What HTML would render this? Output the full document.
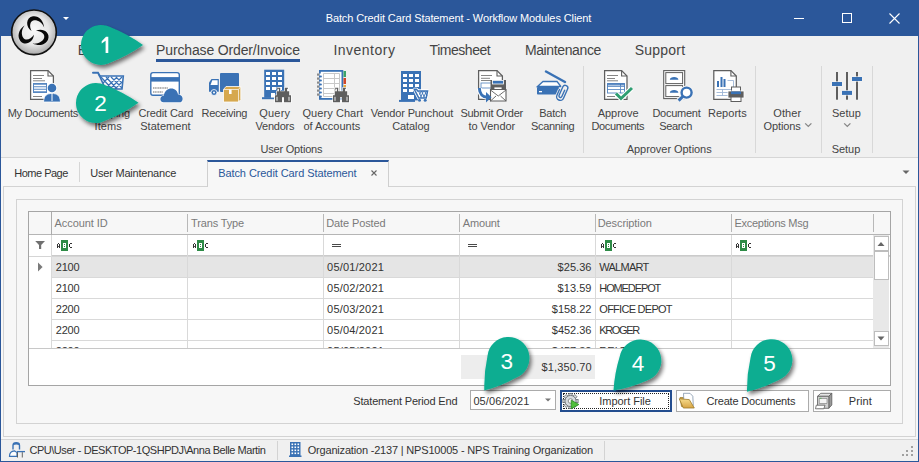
<!DOCTYPE html>
<html><head><meta charset="utf-8"><style>
html,body{margin:0;padding:0;width:919px;height:462px;overflow:hidden;background:#F7F7F7}
.b{position:absolute}
.t{position:absolute;white-space:nowrap;font-family:"Liberation Sans",sans-serif}
svg{position:absolute;left:0;top:0}
</style></head><body>
<div class="b" style="left:0px;top:0px;width:919px;height:36px;background:#2B579A"></div>
<div class="b" style="left:1px;top:36px;width:917px;height:121px;background:#F0F0F0"></div>
<div class="b" style="left:1px;top:157px;width:917px;height:1px;background:#D6D6D6"></div>
<div class="b" style="left:1px;top:158px;width:917px;height:281px;background:#F7F7F7"></div>
<div class="b" style="left:0px;top:36px;width:1px;height:426px;background:#2B579A"></div>
<div class="b" style="left:918px;top:36px;width:1px;height:426px;background:#2B579A"></div>
<div class="b" style="left:0px;top:461px;width:919px;height:1px;background:#2B579A"></div>
<div class="b" style="left:156px;top:59px;width:144px;height:3px;background:#2B579A"></div>
<div class="b" style="left:583px;top:66px;width:1px;height:87px;background:#D8D8D8"></div>
<div class="b" style="left:755px;top:66px;width:1px;height:87px;background:#D8D8D8"></div>
<div class="b" style="left:821px;top:66px;width:1px;height:87px;background:#D8D8D8"></div>
<div class="b" style="left:872px;top:66px;width:1px;height:87px;background:#D8D8D8"></div>
<div class="b" style="left:79px;top:162px;width:1px;height:20px;background:#D6D6D6"></div>
<div class="b" style="left:3px;top:186px;width:913px;height:251px;border:1px solid #D3D3D3;box-sizing:border-box;background:#F7F7F7"></div>
<div class="b" style="left:207px;top:160px;width:182px;height:27px;border:1px solid #CFCFCF;border-bottom:none;border-top:2px solid #2B579A;box-sizing:border-box;background:#F7F7F7"></div>
<div class="b" style="left:16px;top:199px;width:887px;height:225px;border:1px solid #D3D3D3;box-sizing:border-box;background:#F7F7F7"></div>
<div class="b" style="left:28px;top:211px;width:863px;height:175px;border:1px solid #A5A5A5;box-sizing:border-box;background:#fff"></div>
<div class="b" style="left:29px;top:212px;width:861px;height:22px;background:#F7F7F7"></div>
<div class="b" style="left:29px;top:234px;width:861px;height:1px;background:#B5B5B5"></div>
<div class="b" style="left:29px;top:256px;width:861px;height:1px;background:#D5D5D5"></div>
<div class="b" style="left:52px;top:255px;width:838px;height:1px;background:#CBCBCB"></div>
<div class="b" style="left:52px;top:257px;width:821px;height:20px;background:#E5E5E5"></div>
<div class="b" style="left:52px;top:277px;width:821px;height:1px;background:#D9D9D9"></div>
<div class="b" style="left:52px;top:298px;width:821px;height:1px;background:#D9D9D9"></div>
<div class="b" style="left:52px;top:319px;width:821px;height:1px;background:#D9D9D9"></div>
<div class="b" style="left:52px;top:340px;width:821px;height:1px;background:#D9D9D9"></div>
<div class="b" style="left:187px;top:214px;width:1px;height:18px;background:#B8B8B8"></div>
<div class="b" style="left:187px;top:235px;width:1px;height:113px;background:#D9D9D9"></div>
<div class="b" style="left:323px;top:214px;width:1px;height:18px;background:#B8B8B8"></div>
<div class="b" style="left:323px;top:235px;width:1px;height:113px;background:#D9D9D9"></div>
<div class="b" style="left:459px;top:214px;width:1px;height:18px;background:#B8B8B8"></div>
<div class="b" style="left:459px;top:235px;width:1px;height:113px;background:#D9D9D9"></div>
<div class="b" style="left:595px;top:214px;width:1px;height:18px;background:#B8B8B8"></div>
<div class="b" style="left:595px;top:235px;width:1px;height:113px;background:#D9D9D9"></div>
<div class="b" style="left:731px;top:214px;width:1px;height:18px;background:#B8B8B8"></div>
<div class="b" style="left:731px;top:235px;width:1px;height:113px;background:#D9D9D9"></div>
<div class="b" style="left:873px;top:214px;width:1px;height:18px;background:#B8B8B8"></div>
<div class="b" style="left:51px;top:212px;width:1px;height:23px;background:#ABABAB"></div>
<div class="b" style="left:51px;top:235px;width:1px;height:113px;background:#D9D9D9"></div>
<div class="b" style="left:29px;top:348px;width:861px;height:1px;background:#C8C8C8"></div>
<div class="b" style="left:873px;top:235px;width:16px;height:113px;background:#E8E8E8"></div>
<div class="b" style="left:874px;top:236px;width:15px;height:15px;border:1px solid #BDBDBD;box-sizing:border-box;background:#fff"></div>
<div class="b" style="left:874px;top:251px;width:15px;height:29px;border:1px solid #BDBDBD;box-sizing:border-box;background:#fff"></div>
<div class="b" style="left:874px;top:331px;width:15px;height:15px;border:1px solid #BDBDBD;box-sizing:border-box;background:#fff"></div>
<div class="b" style="left:461px;top:355px;width:134px;height:24px;background:#EDEDED"></div>
<div class="b" style="left:470px;top:390px;width:86px;height:20px;border:1px solid #ABABAB;box-sizing:border-box;background:#fff"></div>
<div class="b" style="left:560px;top:390px;width:112px;height:22px;border:2px solid #234D8F;box-sizing:border-box;background:#fff"></div>
<div class="b" style="left:563px;top:393px;width:106px;height:16px;border:1px dotted #222;box-sizing:border-box"></div>
<div class="b" style="left:676px;top:390px;width:133px;height:22px;border:1px solid #ABABAB;box-sizing:border-box;background:#fff"></div>
<div class="b" style="left:813px;top:390px;width:78px;height:22px;border:1px solid #ABABAB;box-sizing:border-box;background:#fff"></div>
<div class="b" style="left:1px;top:439px;width:917px;height:1px;background:#D6D6D6"></div>
<div class="b" style="left:1px;top:440px;width:917px;height:21px;background:#F0F0F0"></div>
<div class="b" style="left:277px;top:441px;width:1px;height:19px;background:#D3D3D3"></div>
<div class="b" style="left:604px;top:441px;width:1px;height:19px;background:#D3D3D3"></div>
<svg width="919" height="462" viewBox="0 0 919 462">
<path d="M794 18.5h10" stroke="#fff" stroke-width="1"/>
<rect x="842.5" y="13.5" width="9" height="9" fill="none" stroke="#fff" stroke-width="1"/>
<path d="M889.5 13.5l10 10M899.5 13.5l-10 10" stroke="#fff" stroke-width="1.1"/>
<path d="M63 17h6l-3 3z" fill="#fff"/>
<defs><radialGradient id="lg" cx="0.5" cy="0.45" r="0.55"><stop offset="0" stop-color="#fafafa"/><stop offset="0.6" stop-color="#e6e6e6"/><stop offset="1" stop-color="#a8a8a8"/></radialGradient><filter id="sh" x="-30%" y="-30%" width="160%" height="160%"><feGaussianBlur in="SourceAlpha" stdDeviation="2.2"/><feOffset dx="2" dy="3" result="o"/><feComponentTransfer><feFuncA type="linear" slope="0.55"/></feComponentTransfer><feMerge><feMergeNode/><feMergeNode in="SourceGraphic"/></feMerge></filter></defs>
<circle cx="34" cy="32.3" r="22.3" fill="url(#lg)" stroke="#111" stroke-width="1.6"/>
<path transform="rotate(0 33.8 32.2)" d="M31.5 31 C 25.5 27, 25.5 17.5, 33 16.2 C 38.5 15.5, 43.5 20, 44.2 27.5 C 42 22.5, 38 20, 34 20.3 C 30 20.8, 29 26, 31.5 31 Z" fill="#080808"/>
<path transform="rotate(120 33.8 32.2)" d="M31.5 31 C 25.5 27, 25.5 17.5, 33 16.2 C 38.5 15.5, 43.5 20, 44.2 27.5 C 42 22.5, 38 20, 34 20.3 C 30 20.8, 29 26, 31.5 31 Z" fill="#080808"/>
<path transform="rotate(240 33.8 32.2)" d="M31.5 31 C 25.5 27, 25.5 17.5, 33 16.2 C 38.5 15.5, 43.5 20, 44.2 27.5 C 42 22.5, 38 20, 34 20.3 C 30 20.8, 29 26, 31.5 31 Z" fill="#080808"/>
<path d="M30.6 70.6H48L53.4 76V99.4H30.6Z" fill="#fff" stroke="#5E5E5E" stroke-width="1.25"/><path d="M48 70.6V76H53.4" fill="none" stroke="#5E5E5E" stroke-width="1.1"/>
<path d="M33 75.5h11M33 78.5h9M33 80.8h12M33 96.5h9" stroke="#777" stroke-width="0.9"/>
<rect x="33" y="83" width="14" height="10" fill="#3A72B5" opacity="0.85"/><path d="M34 85.5h12M34 88h12M34 90.5h12" stroke="#fff" stroke-width="1.3"/>
<circle cx="52" cy="88" r="5.2" fill="#fff"/><circle cx="52" cy="88" r="4.3" fill="#3A72B5"/>
<path d="M43.5 102 C44 95,47 93.5,52 93.5 C57 93.5,60 95,60.5 102Z" fill="#3A72B5" stroke="#fff" stroke-width="0.8"/><path d="M52 94v7" stroke="#fff" stroke-width="1"/>
<path d="M93 72.8h5l1.8 3.2" fill="none" stroke="#3A72B5" stroke-width="2" stroke-linecap="round"/>
<path d="M99.6 76H123.3L122 89H105.5Z" fill="#fff" stroke="#3A72B5" stroke-width="1.6"/>
<path d="M101 77L112 89M106 77L117 89M111 77L122 88M116 77L122 83M103 83L109 77M105 89L117 77M110 89L122 77M115 89L122 82" stroke="#3A72B5" stroke-width="1.3"/>
<rect x="150.8" y="72.6" width="28.5" height="22.6" rx="2.2" fill="#fff" stroke="#3A72B5" stroke-width="1.4"/>
<rect x="151" y="77.1" width="28.5" height="4.5" fill="#3A72B5"/>
<path d="M153 88h15M153 92h10" stroke="#666" stroke-width="1.2" stroke-dasharray="1.2 0.5"/>
<path d="M163.5 102.3 C159.3 102.3,159.3 95.8,163.8 95.8 C164.5 91,168 88.6,171.2 88.6 C175 88.6,177.6 91.2,178 94.6 C181.2 94.6,182.8 97,182.6 99.2 C182.5 101.2,181.2 102.3,179.5 102.3 Z" fill="#3A72B5" stroke="#fff" stroke-width="1.1" paint-order="stroke"/>
<rect x="220" y="73" width="19" height="19" rx="1" fill="#3A72B5"/>
<path d="M209 91.8V82.5L211.5 78.9H218.8V91.8Z" fill="#3A72B5"/><path d="M210.5 85L212.3 80.3H217.6V85Z" fill="#fff"/>
<circle cx="214" cy="92.5" r="3" fill="#3A72B5" stroke="#fff" stroke-width="0.8"/><circle cx="214" cy="92.5" r="1" fill="#fff"/>
<path d="M223.5 89.5L226 86.5H240.8V99.5L238.5 102H223.5Z" fill="#D6A84E" stroke="#fff" stroke-width="0.8"/>
<path d="M223.5 89.5H238.5L240.8 86.5M238.5 89.5V102" fill="none" stroke="#fff" stroke-width="0.7"/><rect x="229" y="89.5" width="2.6" height="4.5" fill="#fff"/>
<rect x="264.2" y="69.7" width="20.0" height="28.0" fill="#3A72B5"/><rect x="262" y="97.2" width="12" height="2" fill="#3A72B5"/><rect x="266" y="72" width="4" height="3" fill="#fff"/><rect x="266" y="77" width="4" height="3" fill="#fff"/><rect x="266" y="82" width="4" height="3" fill="#fff"/><rect x="266" y="87" width="4" height="3" fill="#fff"/><rect x="272" y="72" width="4" height="3" fill="#fff"/><rect x="272" y="77" width="4" height="3" fill="#fff"/><rect x="272" y="82" width="4" height="3" fill="#fff"/><rect x="272" y="87" width="4" height="3" fill="#fff"/><rect x="278" y="72" width="4" height="3" fill="#fff"/><rect x="278" y="77" width="4" height="3" fill="#fff"/><rect x="278" y="82" width="4" height="3" fill="#fff"/><rect x="278" y="87" width="4" height="3" fill="#fff"/><rect x="271" y="93" width="4" height="4.5" fill="#fff"/>
<path d="M277 87.8h3.2v3.5h4.6v-3.5h3.2v3.5h1.2v4h1.8v7h-7v-5h-2v5h-7v-7h1.8v-4h1.2z" fill="#5E5E5E" stroke="#fff" stroke-width="1.2" paint-order="stroke"/><path d="M277 96.8v4M289 96.8v4M278.5 88.8v2.5M287.5 88.8v2.5" stroke="#fff" stroke-width="0.9"/>
<rect x="319.9" y="70.9" width="22.5" height="28" fill="#fff" stroke="#3A72B5" stroke-width="1.8"/>
<path d="M323.5 73.5h16v23h-16zM323.5 78.5h16M323.5 83.5h16M323.5 88.5h16M323.5 93.5h16M334.5 73.5v23" fill="none" stroke="#C8C8C8" stroke-width="1"/>
<rect x="317" y="73.5" width="2.6" height="2.2" fill="#8A8A8A"/><rect x="319.6" y="73.5" width="2.2" height="2.2" fill="#fff"/><rect x="319.6" y="75.7" width="2.2" height="1.8" fill="#3A72B5"/>
<rect x="317" y="77.5" width="2.6" height="2.2" fill="#8A8A8A"/><rect x="319.6" y="77.5" width="2.2" height="2.2" fill="#fff"/><rect x="319.6" y="79.7" width="2.2" height="1.8" fill="#3A72B5"/>
<rect x="317" y="81.5" width="2.6" height="2.2" fill="#8A8A8A"/><rect x="319.6" y="81.5" width="2.2" height="2.2" fill="#fff"/><rect x="319.6" y="83.7" width="2.2" height="1.8" fill="#3A72B5"/>
<rect x="317" y="85.5" width="2.6" height="2.2" fill="#8A8A8A"/><rect x="319.6" y="85.5" width="2.2" height="2.2" fill="#fff"/><rect x="319.6" y="87.7" width="2.2" height="1.8" fill="#3A72B5"/>
<rect x="317" y="89.5" width="2.6" height="2.2" fill="#8A8A8A"/><rect x="319.6" y="89.5" width="2.2" height="2.2" fill="#fff"/><rect x="319.6" y="91.7" width="2.2" height="1.8" fill="#3A72B5"/>
<rect x="317" y="93.5" width="2.6" height="2.2" fill="#8A8A8A"/><rect x="319.6" y="93.5" width="2.2" height="2.2" fill="#fff"/><rect x="319.6" y="95.7" width="2.2" height="1.8" fill="#3A72B5"/>
<rect x="343.5" y="71" width="2.5" height="6" fill="#3DA36A"/><rect x="343.5" y="78" width="2.5" height="6" fill="#D0472A"/><rect x="343.5" y="85" width="2.5" height="2.5" fill="#EBA93A"/>
<path d="M335 87.8h3.2v3.5h4.6v-3.5h3.2v3.5h1.2v4h1.8v7h-7v-5h-2v5h-7v-7h1.8v-4h1.2z" fill="#5E5E5E" stroke="#fff" stroke-width="1.2" paint-order="stroke"/><path d="M335 96.8v4M347 96.8v4M336.5 88.8v2.5M345.5 88.8v2.5" stroke="#fff" stroke-width="0.9"/>
<rect x="401" y="71" width="20" height="29.400000000000006" fill="#3A72B5"/><rect x="399" y="99.9" width="16" height="2" fill="#3A72B5"/><rect x="403" y="74" width="4" height="3" fill="#fff"/><rect x="403" y="79" width="4" height="3" fill="#fff"/><rect x="403" y="84" width="4" height="3" fill="#fff"/><rect x="403" y="89" width="4" height="3" fill="#fff"/><rect x="409" y="74" width="4" height="3" fill="#fff"/><rect x="409" y="79" width="4" height="3" fill="#fff"/><rect x="409" y="84" width="4" height="3" fill="#fff"/><rect x="409" y="89" width="4" height="3" fill="#fff"/><rect x="415" y="74" width="4" height="3" fill="#fff"/><rect x="415" y="79" width="4" height="3" fill="#fff"/><rect x="415" y="84" width="4" height="3" fill="#fff"/><rect x="415" y="89" width="4" height="3" fill="#fff"/><rect x="408" y="95" width="6" height="4" fill="#fff"/>
<path d="M414.3 89.3h2.2l1.2 1.6H427.6L426.2 98H418.8ZM419.5 100.3h.1M425.2 100.3h.1" fill="#fff" stroke="#fff" stroke-width="3.2" stroke-linejoin="round" stroke-linecap="round"/>
<path d="M414.3 89.3h2.2l1.2 1.6H427.6L426.2 98H418.8Z" fill="#fff" stroke="#3A72B5" stroke-width="1.5"/>
<path d="M418.5 91L421.5 97.5M421.5 91L424.5 97.5M424.5 91L427 96M419.5 94.5L421.5 91M420.5 97.5L423.5 91M423.5 97.5L426.5 91" stroke="#3A72B5" stroke-width="0.9"/>
<circle cx="419.5" cy="100.3" r="1.5" fill="#3A72B5"/><circle cx="425.2" cy="100.3" r="1.5" fill="#3A72B5"/>
<path d="M478.6 70.6H497L502.4 76V99.4H478.6Z" fill="#fff" stroke="#5E5E5E" stroke-width="1.25"/><path d="M497 70.6V76H502.4" fill="none" stroke="#5E5E5E" stroke-width="1.1"/>
<path d="M481 75.5h11M481 78.3h9M481 80.5h11" stroke="#777" stroke-width="0.9"/>
<rect x="481" y="83" width="11" height="5" fill="#fff" stroke="#3A72B5" stroke-width="0.9" opacity="0.8"/>
<rect x="490.5" y="80" width="15.5" height="9" fill="#5E5E5E"/><rect x="492.5" y="80.5" width="11" height="3.5" fill="#3A72B5" stroke="#fff" stroke-width="0.8"/><rect x="494" y="87" width="8" height="3" fill="#fff" stroke="#5E5E5E" stroke-width="0.8"/>
<path d="M490.5 89.5h15.5v11.5h-15.5z" fill="#fff" stroke="#5E5E5E" stroke-width="1.1"/><path d="M490.5 90l7.75 6 7.75-6M490.5 101l5.5-5M506 101l-5.5-5" fill="none" stroke="#5E5E5E" stroke-width="0.9"/>
<path d="M479.3 88 C479.5 94,483 97.2,487.5 97.2" fill="none" stroke="#fff" stroke-width="5"/><path d="M479.3 88 C479.5 94,483 97.2,487.5 97.2" fill="none" stroke="#3A72B5" stroke-width="3"/><path d="M486 92l5.5 5.2-5.5 5.2z" fill="#3A72B5"/>
<path d="M546 71.5L565 82" stroke="#3A72B5" stroke-width="2.5" stroke-linecap="round"/>
<path d="M537.5 86.5L543 81.5H557L561 86.5Z" fill="#fff" stroke="#3A72B5" stroke-width="1.3"/>
<rect x="537" y="87" width="22" height="7.5" rx="0.8" fill="#3A72B5"/><rect x="539" y="91" width="3" height="1.3" fill="#fff"/>
<path transform="translate(562.8 83.3) rotate(24)" d="M4.5 5V12.5A1.5 1.5 0 0 1 1.5 12.5V3.2A2.6 2.6 0 0 1 6.7 3.2V13.3A3.6 3.6 0 0 1 -0.5 13.3V6.5" fill="none" stroke="#F0F0F0" stroke-width="3"/>
<path transform="translate(562.8 83.3) rotate(24)" d="M4.5 5V12.5A1.5 1.5 0 0 1 1.5 12.5V3.2A2.6 2.6 0 0 1 6.7 3.2V13.3A3.6 3.6 0 0 1 -0.5 13.3V6.5" fill="none" stroke="#3A72B5" stroke-width="1.4"/>
<path d="M604.6 70.6H621.6L627.0 76V99.4H604.6Z" fill="#fff" stroke="#5E5E5E" stroke-width="1.25"/><path d="M621.6 70.6V76H627.0" fill="none" stroke="#5E5E5E" stroke-width="1.1"/>
<path d="M607 75.5h11M607 78.5h8M607 80.8h11M607 96.5h8" stroke="#777" stroke-width="0.9"/>
<rect x="607.5" y="83.5" width="17" height="9.5" fill="#fff" stroke="#3A72B5" stroke-width="1" opacity="0.8"/><path d="M607.5 86.5h17M607.5 89.5h17M620.5 84v9" stroke="#3A72B5" stroke-width="0.9" opacity="0.8"/><rect x="607.5" y="83.5" width="17" height="2" fill="#3A72B5" opacity="0.8"/>
<path d="M616 93.5L621 98.5L632 88" fill="none" stroke="#fff" stroke-width="5"/><path d="M616 93.5L621 98.5L632 88" fill="none" stroke="#2F9E72" stroke-width="3"/>
<rect x="663.7" y="70.6" width="21" height="28" fill="#fff" stroke="#5E5E5E" stroke-width="1.1"/>
<rect x="665.8" y="72.6" width="16.8" height="11" fill="#fff" stroke="#5E5E5E" stroke-width="1"/><rect x="665.8" y="85.6" width="16.8" height="11" fill="#fff" stroke="#5E5E5E" stroke-width="1"/>
<path d="M669.8 79.8 C669.8 76.2,678.4 76.2,678.4 79.8Z" fill="#3A72B5"/><path d="M669.8 92.8 C669.8 89.2,678.4 89.2,678.4 92.8Z" fill="#3A72B5"/>
<circle cx="686.6" cy="92.6" r="5.2" fill="#fff" stroke="#F4F4F4" stroke-width="4"/><path d="M682.6 96.6L678.3 100.8" stroke="#F4F4F4" stroke-width="5"/><circle cx="686.6" cy="92.6" r="5" fill="#fff" stroke="#3A72B5" stroke-width="2.4"/><path d="M683 96.2L678.6 100.6" stroke="#3A72B5" stroke-width="3"/>
<path d="M713.8000000000001 70.6H730.9L736.3 76V99.4H713.8000000000001Z" fill="#fff" stroke="#5E5E5E" stroke-width="1.25"/><path d="M730.9 70.6V76H736.3" fill="none" stroke="#5E5E5E" stroke-width="1.1"/>
<rect x="717" y="81" width="2" height="6" fill="#3A72B5"/><rect x="720.5" y="77" width="2" height="10" fill="#3A72B5"/><rect x="723.5" y="79" width="2" height="8" fill="#3A72B5"/>
<path d="M716.5 89.5h17M716.5 92.5h17M716.5 95.5h14M727.5 80.5h6v15M722.5 89v7" fill="none" stroke="#9DB5D6" stroke-width="0.9"/>
<rect x="731.5" y="87" width="9" height="5" fill="#fff" stroke="#5E5E5E" stroke-width="1"/><rect x="728" y="91" width="16" height="7" fill="#5E5E5E" stroke="#fff" stroke-width="0.8"/><rect x="731" y="91.5" width="10" height="2.6" fill="#3A72B5"/><rect x="731" y="97" width="10" height="4.5" fill="#fff" stroke="#5E5E5E" stroke-width="1"/>
<rect x="836" y="72" width="2" height="27.7" fill="#5E5E5E"/>
<rect x="846" y="72" width="2" height="27.7" fill="#5E5E5E"/>
<rect x="856" y="72" width="2" height="27.7" fill="#5E5E5E"/>
<rect x="832" y="82" width="10" height="4" fill="#3A72B5" stroke="#F4F4F4" stroke-width="1.2" paint-order="stroke"/><rect x="842" y="90.9" width="10" height="4" fill="#3A72B5" stroke="#F4F4F4" stroke-width="1.2" paint-order="stroke"/><rect x="852" y="77" width="10" height="4" fill="#3A72B5" stroke="#F4F4F4" stroke-width="1.2" paint-order="stroke"/>
<path d="M805.2 123.4l3.1 3 3.1-3" fill="none" stroke="#858585" stroke-width="1.3"/>
<path d="M844.2 123.4l3.1 3 3.1-3" fill="none" stroke="#858585" stroke-width="1.3"/>
<path d="M371.5 170.5l5 5M376.5 170.5l-5 5" stroke="#666" stroke-width="1.1"/>
<path d="M902.5 170.5h7l-3.5 3.5z" fill="#666"/>
<path d="M35.2 241H45L41.2 245V249H39V245Z" fill="#707070"/>
<g shape-rendering="crispEdges"><rect x="57" y="244" width="1" height="4" fill="#333"/><rect x="59" y="244" width="1" height="4" fill="#333"/><rect x="58" y="243" width="1" height="1" fill="#333"/><rect x="58" y="246" width="1" height="1" fill="#555"/><rect x="61" y="240" width="7" height="11" fill="#2E8B47"/><rect x="63" y="243" width="3" height="5" fill="#fff"/><rect x="64" y="244" width="1" height="1" fill="#2E8B47"/><rect x="64" y="246" width="1" height="1" fill="#2E8B47"/><rect x="69" y="244" width="1" height="3" fill="#333"/><rect x="70" y="243" width="2" height="1" fill="#333"/><rect x="70" y="247" width="2" height="1" fill="#333"/></g>
<g shape-rendering="crispEdges"><rect x="193" y="244" width="1" height="4" fill="#333"/><rect x="195" y="244" width="1" height="4" fill="#333"/><rect x="194" y="243" width="1" height="1" fill="#333"/><rect x="194" y="246" width="1" height="1" fill="#555"/><rect x="197" y="240" width="7" height="11" fill="#2E8B47"/><rect x="199" y="243" width="3" height="5" fill="#fff"/><rect x="200" y="244" width="1" height="1" fill="#2E8B47"/><rect x="200" y="246" width="1" height="1" fill="#2E8B47"/><rect x="205" y="244" width="1" height="3" fill="#333"/><rect x="206" y="243" width="2" height="1" fill="#333"/><rect x="206" y="247" width="2" height="1" fill="#333"/></g>
<g shape-rendering="crispEdges"><rect x="601" y="244" width="1" height="4" fill="#333"/><rect x="603" y="244" width="1" height="4" fill="#333"/><rect x="602" y="243" width="1" height="1" fill="#333"/><rect x="602" y="246" width="1" height="1" fill="#555"/><rect x="605" y="240" width="7" height="11" fill="#2E8B47"/><rect x="607" y="243" width="3" height="5" fill="#fff"/><rect x="608" y="244" width="1" height="1" fill="#2E8B47"/><rect x="608" y="246" width="1" height="1" fill="#2E8B47"/><rect x="613" y="244" width="1" height="3" fill="#333"/><rect x="614" y="243" width="2" height="1" fill="#333"/><rect x="614" y="247" width="2" height="1" fill="#333"/></g>
<g shape-rendering="crispEdges"><rect x="736" y="244" width="1" height="4" fill="#333"/><rect x="738" y="244" width="1" height="4" fill="#333"/><rect x="737" y="243" width="1" height="1" fill="#333"/><rect x="737" y="246" width="1" height="1" fill="#555"/><rect x="740" y="240" width="7" height="11" fill="#2E8B47"/><rect x="742" y="243" width="3" height="5" fill="#fff"/><rect x="743" y="244" width="1" height="1" fill="#2E8B47"/><rect x="743" y="246" width="1" height="1" fill="#2E8B47"/><rect x="748" y="244" width="1" height="3" fill="#333"/><rect x="749" y="243" width="2" height="1" fill="#333"/><rect x="749" y="247" width="2" height="1" fill="#333"/></g>
<g shape-rendering="crispEdges"><rect x="332" y="244" width="9" height="1" fill="#4A4A4A"/><rect x="332" y="246" width="9" height="1" fill="#4A4A4A"/></g>
<g shape-rendering="crispEdges"><rect x="468" y="244" width="9" height="1" fill="#4A4A4A"/><rect x="468" y="246" width="9" height="1" fill="#4A4A4A"/></g>
<path d="M38 262.6L42.6 267L38 271.4Z" fill="#7A7A7A"/>
<path d="M877.5 246l3.5-4 3.5 4z" fill="#666"/><path d="M877.5 336.5l3.5 4 3.5-4z" fill="#666"/>
<path d="M545 398.5h6l-3 3z" fill="#777"/>
<rect x="-1.6" y="-7.6" width="3.2" height="3" fill="#D8DCE0" stroke="#6A6E72" stroke-width="0.8" transform="translate(570.5 401) rotate(0)"/><rect x="-1.6" y="-7.6" width="3.2" height="3" fill="#D8DCE0" stroke="#6A6E72" stroke-width="0.8" transform="translate(570.5 401) rotate(45)"/><rect x="-1.6" y="-7.6" width="3.2" height="3" fill="#D8DCE0" stroke="#6A6E72" stroke-width="0.8" transform="translate(570.5 401) rotate(90)"/><rect x="-1.6" y="-7.6" width="3.2" height="3" fill="#D8DCE0" stroke="#6A6E72" stroke-width="0.8" transform="translate(570.5 401) rotate(135)"/><rect x="-1.6" y="-7.6" width="3.2" height="3" fill="#D8DCE0" stroke="#6A6E72" stroke-width="0.8" transform="translate(570.5 401) rotate(180)"/><rect x="-1.6" y="-7.6" width="3.2" height="3" fill="#D8DCE0" stroke="#6A6E72" stroke-width="0.8" transform="translate(570.5 401) rotate(225)"/><rect x="-1.6" y="-7.6" width="3.2" height="3" fill="#D8DCE0" stroke="#6A6E72" stroke-width="0.8" transform="translate(570.5 401) rotate(270)"/><rect x="-1.6" y="-7.6" width="3.2" height="3" fill="#D8DCE0" stroke="#6A6E72" stroke-width="0.8" transform="translate(570.5 401) rotate(315)"/>
<circle cx="570.5" cy="401" r="5.6" fill="#D8DCE0" stroke="#6A6E72" stroke-width="0.9"/><circle cx="570.5" cy="401" r="2.3" fill="#fff" stroke="#777" stroke-width="0.8"/>
<path d="M571.2 400.2L578.9 404.5L571.2 408.8Z" fill="#4FBF3A" stroke="#2A8A22" stroke-width="0.8"/>
<defs><linearGradient id="fg" x1="0" y1="0" x2="0" y2="1"><stop offset="0" stop-color="#F6DC8C"/><stop offset="1" stop-color="#D8A444"/></linearGradient></defs>
<path d="M680 397.5H684.5L686 399H692.5V406.5H681.5Z" fill="#CFA245" stroke="#9C7A2A" stroke-width="0.7"/>
<path d="M683.5 393.3H690L692.8 396.2L693.3 405.5H684Z" fill="#fff" stroke="#7F93AA" stroke-width="0.8"/>
<path d="M679.2 398.8L689.3 399.6L694.3 408H683.3Z" fill="url(#fg)" stroke="#9C7A2A" stroke-width="0.8"/>
<path d="M817.5 396.3L820.8 393.3H831.8L828.8 396.3Z" fill="#E6E6E6" stroke="#5A5A5A" stroke-width="0.8"/>
<path d="M828.8 396.3L831.8 393.3V405L828.8 408.3Z" fill="#9A9A9A" stroke="#5A5A5A" stroke-width="0.8"/>
<path d="M817.5 396.3H828.8V408.3H817.5Z" fill="#D0D0D0" stroke="#5A5A5A" stroke-width="0.8"/>
<path d="M819.3 398.5H827V403.5H819.3Z" fill="#F4F4F4" stroke="#777" stroke-width="0.6"/><path d="M819.5 398.3h2" stroke="#4CAF50" stroke-width="0.8"/>
<path d="M816.3 405.2H825L823.8 408.8H815.5Z" fill="#fff" stroke="#5A5A5A" stroke-width="0.8"/>
<path d="M13 449.5V445.5C13 441.8,19.5 441.8,19.5 445.5V449.5" fill="none" stroke="#3A72B5" stroke-width="1.4"/><path d="M13.2 444.2C15 443.5,17.5 443.5,19.3 444.2" fill="none" stroke="#3A72B5" stroke-width="1.6"/>
<path d="M9.5 456.3C9.5 453,11.5 451,14.5 450.8L17 452.5V456.3Z" fill="#fff" stroke="#3A72B5" stroke-width="1.2"/><path d="M17 451.6H25" stroke="#3A72B5" stroke-width="1.3"/><path d="M17.5 452.2V457.5M22.3 452.2V457.5" stroke="#555" stroke-width="0.9"/>
<rect x="290" y="442" width="10.5" height="14" fill="#3A72B5"/><rect x="289" y="455.5" width="12.5" height="1.5" fill="#3A72B5"/>
<rect x="291.5" y="443.5" width="1.6" height="1.6" fill="#fff"/>
<rect x="291.5" y="446.5" width="1.6" height="1.6" fill="#fff"/>
<rect x="291.5" y="449.5" width="1.6" height="1.6" fill="#fff"/>
<rect x="291.5" y="452.5" width="1.6" height="1.6" fill="#fff"/>
<rect x="294.5" y="443.5" width="1.6" height="1.6" fill="#fff"/>
<rect x="294.5" y="446.5" width="1.6" height="1.6" fill="#fff"/>
<rect x="294.5" y="449.5" width="1.6" height="1.6" fill="#fff"/>
<rect x="294.5" y="452.5" width="1.6" height="1.6" fill="#fff"/>
<rect x="297.5" y="443.5" width="1.6" height="1.6" fill="#fff"/>
<rect x="297.5" y="446.5" width="1.6" height="1.6" fill="#fff"/>
<rect x="297.5" y="449.5" width="1.6" height="1.6" fill="#fff"/>
<rect x="297.5" y="452.5" width="1.6" height="1.6" fill="#fff"/>
<rect x="911" y="446" width="2" height="2" fill="#A0A0A0"/>
<rect x="906" y="450" width="2" height="2" fill="#A0A0A0"/>
<rect x="911" y="450" width="2" height="2" fill="#A0A0A0"/>
<rect x="902" y="454" width="2" height="2" fill="#A0A0A0"/>
<rect x="906" y="454" width="2" height="2" fill="#A0A0A0"/>
<rect x="911" y="454" width="2" height="2" fill="#A0A0A0"/>
</svg>
<span class="t" style="left:325.7px;top:12.0px;font-size:11px;line-height:12.29px;color:#fff;letter-spacing:-0.108px;font-weight:normal;">Batch Credit Card Statement - Workflow Modules Client</span>
<span class="t" style="left:77.7px;top:42.8px;font-size:14px;line-height:15.64px;color:#444;letter-spacing:0.000px;font-weight:normal;">B</span>
<span class="t" style="left:156.1px;top:42.8px;font-size:14px;line-height:15.64px;color:#444;letter-spacing:-0.151px;font-weight:normal;">Purchase Order/Invoice</span>
<span class="t" style="left:333.4px;top:42.8px;font-size:14px;line-height:15.64px;color:#444;letter-spacing:0.489px;font-weight:normal;">Inventory</span>
<span class="t" style="left:429.6px;top:42.8px;font-size:14px;line-height:15.64px;color:#444;letter-spacing:-0.467px;font-weight:normal;">Timesheet</span>
<span class="t" style="left:524.9px;top:42.8px;font-size:14px;line-height:15.64px;color:#444;letter-spacing:-0.377px;font-weight:normal;">Maintenance</span>
<span class="t" style="left:634.8px;top:42.8px;font-size:14px;line-height:15.64px;color:#444;letter-spacing:0.211px;font-weight:normal;">Support</span>
<span class="t" style="left:7.7px;top:107.0px;font-size:11px;line-height:12.29px;color:#444;letter-spacing:-0.250px;font-weight:normal;">My Documents</span>
<span class="t" style="left:86.0px;top:107.0px;font-size:11px;line-height:12.29px;color:#444;letter-spacing:-0.355px;font-weight:normal;">Shopping</span>
<span class="t" style="left:94.5px;top:119.5px;font-size:11px;line-height:12.29px;color:#444;letter-spacing:0.077px;font-weight:normal;">Items</span>
<span class="t" style="left:138.5px;top:107.0px;font-size:11px;line-height:12.29px;color:#444;letter-spacing:-0.144px;font-weight:normal;">Credit Card</span>
<span class="t" style="left:140.2px;top:119.5px;font-size:11px;line-height:12.29px;color:#444;letter-spacing:0.033px;font-weight:normal;">Statement</span>
<span class="t" style="left:201.5px;top:107.0px;font-size:11px;line-height:12.29px;color:#444;letter-spacing:-0.313px;font-weight:normal;">Receiving</span>
<span class="t" style="left:259.3px;top:107.0px;font-size:11px;line-height:12.29px;color:#444;letter-spacing:0.186px;font-weight:normal;">Query</span>
<span class="t" style="left:255.6px;top:119.5px;font-size:11px;line-height:12.29px;color:#444;letter-spacing:-0.244px;font-weight:normal;">Vendors</span>
<span class="t" style="left:302.4px;top:107.0px;font-size:11px;line-height:12.29px;color:#444;letter-spacing:0.079px;font-weight:normal;">Query Chart</span>
<span class="t" style="left:303.4px;top:119.5px;font-size:11px;line-height:12.29px;color:#444;letter-spacing:0.002px;font-weight:normal;">of Accounts</span>
<span class="t" style="left:370.7px;top:107.0px;font-size:11px;line-height:12.29px;color:#444;letter-spacing:-0.136px;font-weight:normal;">Vendor Punchout</span>
<span class="t" style="left:392.3px;top:119.5px;font-size:11px;line-height:12.29px;color:#444;letter-spacing:-0.119px;font-weight:normal;">Catalog</span>
<span class="t" style="left:460.4px;top:107.0px;font-size:11px;line-height:12.29px;color:#444;letter-spacing:-0.237px;font-weight:normal;">Submit Order</span>
<span class="t" style="left:468.5px;top:119.5px;font-size:11px;line-height:12.29px;color:#444;letter-spacing:-0.049px;font-weight:normal;">to Vendor</span>
<span class="t" style="left:539.2px;top:107.0px;font-size:11px;line-height:12.29px;color:#444;letter-spacing:-0.257px;font-weight:normal;">Batch</span>
<span class="t" style="left:531.1px;top:119.5px;font-size:11px;line-height:12.29px;color:#444;letter-spacing:-0.338px;font-weight:normal;">Scanning</span>
<span class="t" style="left:597.7px;top:107.0px;font-size:11px;line-height:12.29px;color:#444;letter-spacing:-0.012px;font-weight:normal;">Approve</span>
<span class="t" style="left:591.4px;top:119.5px;font-size:11px;line-height:12.29px;color:#444;letter-spacing:-0.317px;font-weight:normal;">Documents</span>
<span class="t" style="left:652.4px;top:107.0px;font-size:11px;line-height:12.29px;color:#444;letter-spacing:-0.262px;font-weight:normal;">Document</span>
<span class="t" style="left:659.2px;top:119.5px;font-size:11px;line-height:12.29px;color:#444;letter-spacing:-0.351px;font-weight:normal;">Search</span>
<span class="t" style="left:708.0px;top:107.0px;font-size:11px;line-height:12.29px;color:#444;letter-spacing:0.031px;font-weight:normal;">Reports</span>
<span class="t" style="left:773.2px;top:107.0px;font-size:11px;line-height:12.29px;color:#444;letter-spacing:0.147px;font-weight:normal;">Other</span>
<span class="t" style="left:763.5px;top:119.5px;font-size:11px;line-height:12.29px;color:#444;letter-spacing:-0.118px;font-weight:normal;">Options</span>
<span class="t" style="left:832.0px;top:107.0px;font-size:11px;line-height:12.29px;color:#444;letter-spacing:0.013px;font-weight:normal;">Setup</span>
<span class="t" style="left:260.4px;top:142.5px;font-size:11px;line-height:12.29px;color:#444;letter-spacing:-0.190px;font-weight:normal;">User Options</span>
<span class="t" style="left:626.7px;top:142.5px;font-size:11px;line-height:12.29px;color:#444;letter-spacing:-0.040px;font-weight:normal;">Approver Options</span>
<span class="t" style="left:831.7px;top:142.5px;font-size:11px;line-height:12.29px;color:#444;letter-spacing:-0.037px;font-weight:normal;">Setup</span>
<span class="t" style="left:14.3px;top:167.0px;font-size:11px;line-height:12.29px;color:#333;letter-spacing:-0.511px;font-weight:normal;">Home Page</span>
<span class="t" style="left:90.3px;top:167.0px;font-size:11px;line-height:12.29px;color:#333;letter-spacing:-0.218px;font-weight:normal;">User Maintenance</span>
<span class="t" style="left:218.2px;top:167.0px;font-size:11px;line-height:12.29px;color:#2B579A;letter-spacing:-0.082px;font-weight:normal;">Batch Credit Card Statement</span>
<span class="t" style="left:54.6px;top:217.0px;font-size:11px;line-height:12.29px;color:#7a7a7a;letter-spacing:-0.089px;font-weight:normal;">Account ID</span>
<span class="t" style="left:191.0px;top:217.0px;font-size:11px;line-height:12.29px;color:#7a7a7a;letter-spacing:-0.146px;font-weight:normal;">Trans Type</span>
<span class="t" style="left:326.2px;top:217.0px;font-size:11px;line-height:12.29px;color:#7a7a7a;letter-spacing:-0.114px;font-weight:normal;">Date Posted</span>
<span class="t" style="left:462.7px;top:217.0px;font-size:11px;line-height:12.29px;color:#7a7a7a;letter-spacing:-0.142px;font-weight:normal;">Amount</span>
<span class="t" style="left:597.7px;top:217.0px;font-size:11px;line-height:12.29px;color:#7a7a7a;letter-spacing:-0.092px;font-weight:normal;">Description</span>
<span class="t" style="left:734.4px;top:217.0px;font-size:11px;line-height:12.29px;color:#7a7a7a;letter-spacing:-0.265px;font-weight:normal;">Exceptions Msg</span>
<span class="t" style="left:541.5px;top:360.8px;font-size:11px;line-height:12.29px;color:#333;letter-spacing:0.133px;font-weight:normal;">$1,350.70</span>
<span class="t" style="left:353.3px;top:395.0px;font-size:11px;line-height:12.29px;color:#333;letter-spacing:-0.175px;font-weight:normal;">Statement Period End</span>
<span class="t" style="left:473.4px;top:394.5px;font-size:11px;line-height:12.29px;color:#333;letter-spacing:0.105px;font-weight:normal;">05/06/2021</span>
<span class="t" style="left:599.3px;top:395.0px;font-size:11px;line-height:12.29px;color:#333;letter-spacing:-0.045px;font-weight:normal;">Import File</span>
<span class="t" style="left:706.5px;top:395.0px;font-size:11px;line-height:12.29px;color:#333;letter-spacing:-0.187px;font-weight:normal;">Create Documents</span>
<span class="t" style="left:848.7px;top:395.0px;font-size:11px;line-height:12.29px;color:#333;letter-spacing:0.121px;font-weight:normal;">Print</span>
<span class="t" style="left:29.4px;top:443.6px;font-size:11px;line-height:12.29px;color:#333;letter-spacing:-0.454px;font-weight:normal;">CPU\User - DESKTOP-1QSHPDJ\Anna Belle Martin</span>
<span class="t" style="left:307.7px;top:443.6px;font-size:11px;line-height:12.29px;color:#333;letter-spacing:-0.185px;font-weight:normal;">Organization -2137 | NPS10005 - NPS Training Organization</span>
<div class="b" style="left:0;top:257px;width:873px;height:91px;overflow:hidden"><div class="b" style="left:0;top:-257px;width:919px;height:462px">
<span class="t" style="left:55.8px;top:260.8px;font-size:11px;line-height:12.29px;color:#333;letter-spacing:-0.224px;font-weight:normal;">2100</span>
<span class="t" style="left:327.1px;top:260.8px;font-size:11px;line-height:12.29px;color:#333;letter-spacing:0.183px;font-weight:normal;">05/01/2021</span>
<span class="t" style="left:557.6px;top:260.8px;font-size:11px;line-height:12.29px;color:#333;letter-spacing:0.031px;font-weight:normal;">$25.36</span>
<span class="t" style="left:599.3px;top:260.8px;font-size:11px;line-height:12.29px;color:#333;letter-spacing:-0.749px;font-weight:normal;">WALMART</span>
<span class="t" style="left:55.8px;top:281.8px;font-size:11px;line-height:12.29px;color:#333;letter-spacing:-0.224px;font-weight:normal;">2100</span>
<span class="t" style="left:327.1px;top:281.8px;font-size:11px;line-height:12.29px;color:#333;letter-spacing:0.183px;font-weight:normal;">05/02/2021</span>
<span class="t" style="left:557.6px;top:281.8px;font-size:11px;line-height:12.29px;color:#333;letter-spacing:0.031px;font-weight:normal;">$13.59</span>
<span class="t" style="left:599.3px;top:281.8px;font-size:11px;line-height:12.29px;color:#333;letter-spacing:-1.112px;font-weight:normal;">HOMEDEPOT</span>
<span class="t" style="left:55.8px;top:302.8px;font-size:11px;line-height:12.29px;color:#333;letter-spacing:-0.224px;font-weight:normal;">2200</span>
<span class="t" style="left:327.1px;top:302.8px;font-size:11px;line-height:12.29px;color:#333;letter-spacing:0.183px;font-weight:normal;">05/03/2021</span>
<span class="t" style="left:551.8px;top:302.8px;font-size:11px;line-height:12.29px;color:#333;letter-spacing:-0.027px;font-weight:normal;">$158.22</span>
<span class="t" style="left:599.3px;top:302.8px;font-size:11px;line-height:12.29px;color:#333;letter-spacing:-0.726px;font-weight:normal;">OFFICE DEPOT</span>
<span class="t" style="left:55.8px;top:323.8px;font-size:11px;line-height:12.29px;color:#333;letter-spacing:-0.224px;font-weight:normal;">2200</span>
<span class="t" style="left:327.1px;top:323.8px;font-size:11px;line-height:12.29px;color:#333;letter-spacing:0.183px;font-weight:normal;">05/04/2021</span>
<span class="t" style="left:551.8px;top:323.8px;font-size:11px;line-height:12.29px;color:#333;letter-spacing:-0.027px;font-weight:normal;">$452.36</span>
<span class="t" style="left:599.3px;top:323.8px;font-size:11px;line-height:12.29px;color:#333;letter-spacing:-1.355px;font-weight:normal;">KROGER</span>
<span class="t" style="left:55.8px;top:344.8px;font-size:11px;line-height:12.29px;color:#333;letter-spacing:-0.224px;font-weight:normal;">2200</span>
<span class="t" style="left:327.1px;top:344.8px;font-size:11px;line-height:12.29px;color:#333;letter-spacing:0.183px;font-weight:normal;">05/05/2021</span>
<span class="t" style="left:551.8px;top:344.8px;font-size:11px;line-height:12.29px;color:#333;letter-spacing:-0.027px;font-weight:normal;">$457.32</span>
<span class="t" style="left:599.3px;top:344.8px;font-size:11px;line-height:12.29px;color:#333;letter-spacing:0.100px;font-weight:normal;">RELT</span>
</div></div>
<svg width="919" height="462" viewBox="0 0 919 462" style="pointer-events:none">
<defs><filter id="sh2" x="-40%" y="-40%" width="180%" height="180%"><feGaussianBlur in="SourceAlpha" stdDeviation="2.2"/><feOffset dx="2" dy="3" result="o"/><feComponentTransfer><feFuncA type="linear" slope="0.55"/></feComponentTransfer><feMerge><feMergeNode/><feMergeNode in="SourceGraphic"/></feMerge></filter></defs>
<g filter="url(#sh2)"><path d="M110.44 62.53 A20 20 0 1 1 110.61 27.36 Q127.87 34.29 143 45.1 Q127.77 55.77 110.44 62.53Z" fill="#0AAD91"/></g>
<g filter="url(#sh2)"><path d="M105.49 120.60 A20 20 0 1 1 105.33 85.31 Q122.96 92.06 138.5 102.8 Q123.07 113.68 105.49 120.60Z" fill="#0AAD91"/></g>
<text x="100.5" y="111" text-anchor="middle" font-family="Liberation Sans" font-size="22.6" fill="#fff">2</text>
<g filter="url(#sh2)"><path d="M487.49 356.07 A21 21 0 1 1 516.38 377.43 Q501.13 385.94 484.3 390.6 Q483.82 373.14 487.49 356.07Z" fill="#0AAD91"/></g>
<text x="506.9" y="369" text-anchor="middle" font-family="Liberation Sans" font-size="22.6" fill="#fff">3</text>
<g filter="url(#sh2)"><path d="M619.64 356.84 A21 21 0 1 1 646.35 380.71 Q630.52 387.63 613.5 390.6 Q614.54 373.35 619.64 356.84Z" fill="#0AAD91"/></g>
<text x="638" y="371" text-anchor="middle" font-family="Liberation Sans" font-size="22.6" fill="#fff">4</text>
<g filter="url(#sh2)"><path d="M750.51 358.02 A21 21 0 1 1 778.73 379.88 Q763.57 387.69 747 391.7 Q746.74 374.65 750.51 358.02Z" fill="#0AAD91"/></g>
<text x="769.6" y="371" text-anchor="middle" font-family="Liberation Sans" font-size="22.6" fill="#fff">5</text>
<path d="M105.6 36.8H108.3V53H105.6V40.8L101.7 43.6V41.2L106 36.8Z" fill="#fff"/>
</svg>
</body></html>
